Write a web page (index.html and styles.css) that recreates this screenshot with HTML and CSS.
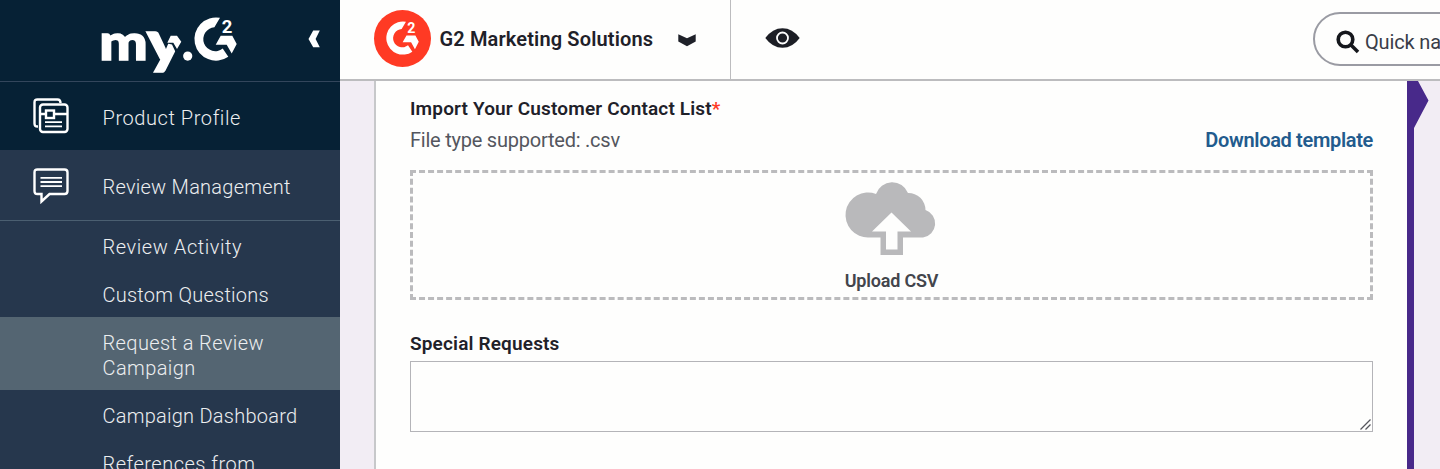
FILE: index.html
```html
<!DOCTYPE html>
<html lang="en">
<head>
<meta charset="utf-8">
<title>my.G2</title>
<link rel="stylesheet" href="styles.css">
</head>
<body>
<svg class="defs" aria-hidden="true">
  <symbol id="g2" viewBox="194 17 43 44" overflow="visible">
    <path d="M220 17.8 A21.6 21.6 0 1 0 228.3 56.8 L222.7 48.6 A12 12 0 1 1 214.4 27.2 Z"/>
    <path d="M220.7 35.7H232.3L236.7 44L231.7 53.5L226.7 44.7H215.7Z"/>
    <text class="sup" x="221.7" y="32.6">2</text>
  </symbol>
</svg>
<div class="app">
  <aside class="sidebar">
    <div class="brand">
      <svg class="brand-logo" viewBox="102 16 136 60" width="136" height="60">
        <text class="my" x="99.2" y="60" textLength="48.5" lengthAdjust="spacingAndGlyphs">m</text>
        <text class="my tail" x="146.8" y="61.5" textLength="37" lengthAdjust="spacingAndGlyphs">y</text>
        <path class="cut" d="M165.5 43L168 31H188V51L176 53L172 44.5Z"/>
        <path d="M170.7 35.7H177L181.3 41.8L177 49L173.3 42.8H167.3Z"/>
        <circle cx="187.7" cy="56.1" r="4.6"/>
        <use href="#g2" x="194" y="17" width="43" height="44"/>
      </svg>
      <svg class="collapse" width="12" height="18" viewBox="0 0 12 18"><path d="M5.2 .5H11.8L7.6 9L11.8 17.2H5.2L.5 9Z"/></svg>
    </div>
    <a class="nav">
      <svg width="36" height="36" viewBox="0 0 36 36"><path d="M5 28.5H4.5Q1.5 28.5 1.5 25.5V4.5Q1.5 1.5 4.5 1.5H24.5Q27.5 1.5 27.5 5"/><rect x="7" y="6.500" width="27.500" height="27.500" rx="3"/><path d="M7 16H13M21 16H34.5"/><rect x="13" y="12.500" width="8" height="7.500"/><path class="thin" d="M12 24.2H29M12 28.3H29"/></svg>
      <span class="t1">Product Profile</span>
    </a>
    <a class="nav open">
      <svg width="36" height="36" viewBox="0 0 36 36"><path d="M4.5 1.5H31.5Q34.5 1.5 34.5 4.5V23Q34.5 26 31.5 26H16.5L8.5 33.5V26H4.5Q1.5 26 1.5 23V4.5Q1.5 1.5 4.5 1.5Z"/><path class="thin" d="M7.5 9.8H29M7.5 14H29M7.5 18.2H29"/></svg>
      <span class="t2">Review Management</span>
    </a>
    <nav class="subnav">
      <a class="t3">Review Activity</a>
      <a class="t4">Custom Questions</a>
      <a class="active t5">Request a Review<br>Campaign</a>
      <a class="t6">Campaign Dashboard</a>
      <a class="t7">References from</a>
    </nav>
  </aside>
  <div class="main">
    <header class="topbar">
      <div class="account">
        <span class="avatar"><svg width="33" height="34"><use href="#g2" width="33" height="34"/></svg></span>
        <span class="account-name">G2 Marketing Solutions</span>
        <svg class="chev" width="18" height="13" viewBox="0 0 18 13"><path d="M.3 .3L9 4.3L17.7 .3V7.5L9 12.2L.3 7.5Z"/></svg>
      </div>
      <svg class="eye" width="35" height="20" viewBox="0 0 35 20"><path d="M.3 10Q7.5 .2 17.5 .2T34.7 10Q27.5 19.8 17.5 19.8T.3 10Z"/><circle cx="17.5" cy="10" r="5.5"/></svg>
      <div class="search">
        <svg width="24" height="24" viewBox="0 0 24 24"><circle cx="9.5" cy="9.5" r="7.3"/><path d="M15 15L22 22"/></svg>
        <span>Quick na</span>
      </div>
    </header>
    <div class="content">
      <section class="panel">
        <h2 class="import">Import Your Customer Contact List<span class="req">*</span></h2>
        <div class="hint"><span class="filetype">File type supported: .csv</span><a class="download">Download template</a></div>
        <div class="drop">
          <svg width="92" height="75" viewBox="0 0 92 75"><path d="M23 56.5A22.500 22.500 0 1 1 30 13A17 17 0 0 1 62 12A17 17 0 0 1 79.5 29A14.2 14.2 0 0 1 77 56.5H57V74H34.5V56.5Z"/><path class="arrow" d="M45.5 31.5L65 50.5H51.5V68.5H40V50.5H26Z"/></svg>
          <span class="upload">Upload CSV</span>
        </div>
        <h2 class="special">Special Requests</h2>
        <div class="area"><svg width="11" height="11" viewBox="0 0 11 11"><path d="M.5 10.5L10.5 .5M5.5 10.5L10.5 5.5"/></svg></div>
      </section>
      <div class="rail"><svg width="22" height="49" viewBox="0 0 22 49"><path d="M0 0H11L21.5 19.5L7 47V49H0Z"/></svg></div>
    </div>
  </div>
</div>
</body>
</html>
```
FILE: styles.css
```css
* { box-sizing: border-box; }
body { margin: 0; overflow: hidden; font-family: Roboto, "Liberation Sans", sans-serif; font-size: 20px; color: #1f2129; }
.defs { position: absolute; width: 0; height: 0; }
.app { display: flex; height: 469px; overflow: hidden; }
.sidebar { flex: 0 0 340px; background: #26374d; color: #eceef0; }
.brand { display: flex; height: 82px; padding: 16px 20px 0 102px; background: #062135; border-bottom: 1px solid #33465c; fill: #fff; }
.brand-logo { overflow: visible; }
.collapse { margin: 14px 0 0 69.5px; }
.my { font: 900 49px Lato, sans-serif; stroke: #fff; stroke-width: 1.4; }
.my.tail { font-size: 57px; }
.sup { font: 700 18.5px Roboto, sans-serif; }
.cut { fill: #062135; }
.nav { display: flex; align-items: center; height: 69px; padding-left: 33px; gap: 33.5px; background: #062135; border-bottom: 1px solid #26374d; font-weight: 350; }
.nav span { padding-top: 3px; }
.nav svg { fill: none; stroke: #fff; stroke-width: 2.4; }
.nav svg .thin { stroke-width: 1.8; }
.nav.open { height: 70px; background: #26374d; border-color: #4b5f71; }
.subnav { display: flex; flex-direction: column; font-weight: 350; line-height: 25.5px; white-space: nowrap; }
.subnav a { padding: 13.5px 0 9px 102.5px; }
.subnav .active { background: #546572; padding-bottom: 8.5px; }
.t1 { letter-spacing: .57px; }
.t2 { letter-spacing: .25px; }
.t3 { letter-spacing: .57px; }
.t4 { letter-spacing: .25px; }
.t5 { letter-spacing: .4px; }
.t6 { letter-spacing: .25px; }
.t7 { letter-spacing: .5px; }
.main { flex: 1; min-width: 0; display: flex; flex-direction: column; background: #fefefd; }
.topbar { display: flex; flex: 0 0 81px; border-bottom: 2px solid #bcbcbe; }
.account { display: flex; flex: 0 0 391px; padding: 9px 0 0 34px; border-right: 1px solid #bcbcbe; }
.avatar { display: grid; place-items: center; flex: 0 0 57px; height: 57px; border-radius: 50%; background: #ff3a24; fill: #fff; margin-top: .5px; }
.account-name { margin-left: 8.5px; width: 214px; line-height: 60px; font-weight: 600; letter-spacing: .14px; white-space: nowrap; }
.chev { margin: 25px 0 0 24.5px; fill: #1f2129; }
.eye { flex: none; margin: 28px 0 0 34px; fill: #1c1e25; }
.eye circle { fill: none; stroke: #fff; stroke-width: 1.8; }
.search { display: flex; align-items: center; flex: 0 0 260px; height: 54px; margin: 12px 0 0 513px; padding: 5px 0 0 21px; gap: 5px; border: 2px solid #9a9ba3; border-radius: 27px; color: #3a3d48; white-space: nowrap; }
.search svg { fill: none; stroke: #15171c; stroke-width: 3.6; }
.search span { letter-spacing: -.15px; }
.content { display: flex; flex: 1; background: #f2edf4; padding-left: 34px; }
.panel { width: 1033px; padding: 14px 34px 0 34px; background: #fefefd; border-left: 2px solid #c7c8ca; }
h2 { margin: 0; font-size: 19px; line-height: 28px; font-weight: 600; letter-spacing: .16px; }
.req { color: #ff3a24; }
.hint { display: flex; justify-content: space-between; line-height: 34px; height: 47px; color: #54565e; }
.filetype { letter-spacing: -.23px; }
.download { color: #225b8d; font-weight: 600; letter-spacing: -.33px; }
.drop { display: flex; flex-direction: column; align-items: center; height: 130px; padding-top: 8px; border: 3px dashed #bbbbbd; }
.drop svg { fill: #b9b9bb; flex: none; overflow: visible; }
.drop .arrow { fill: #fefefd; }
.upload { font-size: 18px; font-weight: 600; line-height: 25px; margin-top: 12px; color: #43454c; letter-spacing: -.2px; }
.special { margin-top: 30px; }
.area { display: flex; justify-content: flex-end; align-items: flex-end; height: 71px; margin-top: 3px; padding: 1px; border: 1px solid #b4b4b8; }
.area svg { stroke: #55565c; stroke-width: 1.3; }
.rail { width: 7px; background: #48298a; }
.rail svg { display: block; overflow: visible; fill: #48298a; }
```
